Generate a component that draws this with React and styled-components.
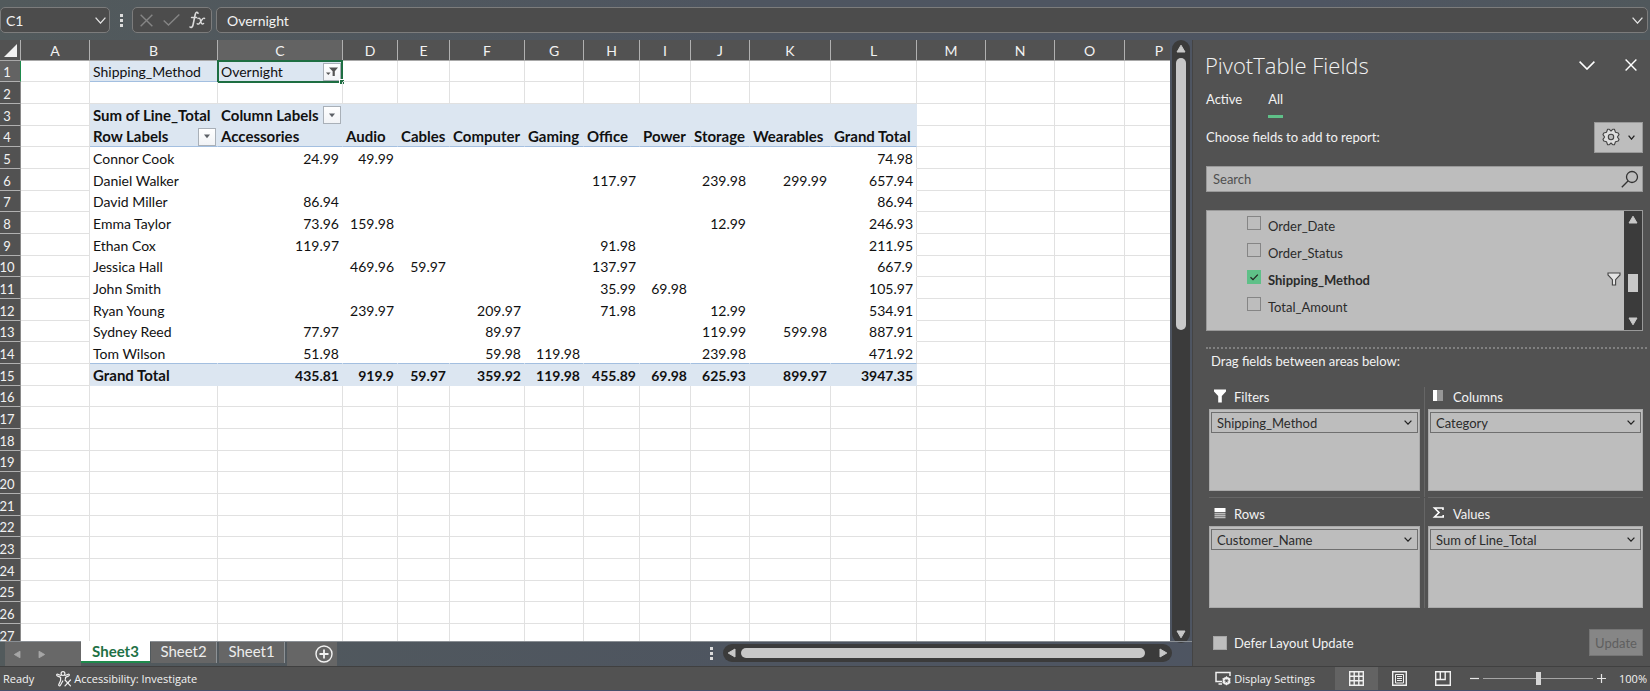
import React, { useState } from "react";
import styled, { createGlobalStyle, css } from "styled-components";

const ui = `"Open Sans", "Noto Sans", sans-serif`;
const sheetFont = `Lato, "Open Sans", sans-serif`;

const Global = createGlobalStyle`
  *, *::before, *::after { box-sizing: border-box; }
  html, body { margin: 0; }
  body { font-family: ${ui}; font-size: 13px; color: #f2f2f2; background: #4e5560; }
  button, input { font: inherit; color: inherit; margin: 0; padding: 0; border: 0; background: none; }
  svg { display: block; flex: none; }
  h2, h3, p { margin: 0; font-weight: 400; }
`;

const Window = styled.div`
  display: flex;
  flex-direction: column;
  height: 100vh;
  overflow: hidden;
  background: linear-gradient(90deg, #525a5c 0%, #4e5560 45%, #4e5562 80%, #50585c 100%);
`;

/* ---------- formula bar ---------- */
const FormulaBar = styled.header`
  display: flex;
  align-items: center;
  height: 40px;
  padding-right: 2px;
`;
const BarBox = styled.div`
  display: flex;
  align-items: center;
  height: 26px;
  width: ${(p) => p.$width || "auto"};
  flex: ${(p) => (p.$grow ? "1" : "none")};
  min-width: 0;
  padding: 0 4px 0 ${(p) => p.$pad || "5px"};
  border: 1px solid #7c7c7c;
  border-radius: 5px;
  background: #4c4c4c;
`;
const BarInput = styled.input`
  flex: 1;
  min-width: 0;
  height: 22px;
  font-family: ${sheetFont};
  font-size: 14px;
  outline: 0;
`;
const IconButton = styled.button`
  display: flex;
  align-items: center;
  justify-content: center;
  width: ${(p) => p.$w || 24}px;
  height: ${(p) => p.$h || 22}px;
  flex: none;
`;
const Dots = styled.div`
  display: flex;
  flex-direction: column;
  align-items: center;
  gap: 2px;
  width: ${(p) => p.$w}px;
  i { width: 3px; height: 3px; background: #dcdcdc; }
`;

/* ---------- workspace ---------- */
const Workspace = styled.main`
  display: flex;
  flex: 1;
  min-height: 0;
`;
const Book = styled.section`
  display: flex;
  flex-direction: column;
  flex: 1;
  min-width: 0;
`;
const GridArea = styled.div`
  display: flex;
  flex: 1;
  min-height: 0;
`;
const Viewport = styled.div`
  flex: 1;
  min-width: 0;
  overflow: hidden;
  background: #fff;
`;
const Grid = styled.table`
  table-layout: fixed;
  width: 0;
  margin-left: -6px;
  border-spacing: 0;
  font-family: ${sheetFont};
  font-size: 14px;
  line-height: 20px;
  color: #111;
`;
const ColHead = styled.th`
  height: 21px;
  padding: 2px 0 0;
  line-height: 18px;
  font-weight: 400;
  color: #f2f2f2;
  background: ${(p) => (p.$on ? "#636363" : "#525252")};
  border-right: 1px solid #b0b0b0;
  border-bottom: 1px solid ${(p) => (p.$on ? "#1e6e42" : "#a8a8a8")};
`;
const RowHead = styled.th`
  padding: 2px 0 0;
  font-size: 13px;
  line-height: 18px;
  font-weight: 400;
  color: #f2f2f2;
  background: ${(p) => (p.$on ? "#636363" : "#525252")};
  border-right: 1px solid ${(p) => (p.$on ? "#1e8a4c" : "#8a8a8a")};
  border-bottom: 1px solid #b0b0b0;
`;
const Corner = styled(ColHead)`
  padding: 0 3px 3px 0;
  vertical-align: bottom;
  svg { margin-left: auto; }
`;
const Row = styled.tr`
  height: 22px;
  &:nth-child(3n + 1) { height: 21px; }
`;
const Cell = styled.td`
  position: relative;
  padding: 1px 3px 0;
  line-height: 19px;
  white-space: nowrap;
  text-align: ${(p) => (p.$num ? "right" : "left")};
  font-weight: ${(p) => (p.$bold ? 700 : 400)};
  font-size: ${(p) => (p.$bold && !p.$num ? 15 : 14)}px;
  border-right: 1px solid #e1e1e1;
  border-bottom: 1px solid #e1e1e1;
  ${(p) =>
    p.$pivot &&
    css`
      border-bottom-color: transparent;
      border-right-color: ${p.$last ? "#e1e1e1" : "transparent"};
    `}
  ${(p) => p.$blue && css`background: #dce6f1; border-color: #dce6f1;`}
  ${(p) => p.$rule && css`border-bottom-color: #a3bfe0;`}
`;
const WithButton = styled.div`
  display: flex;
  align-items: center;
  justify-content: space-between;
  height: 18px;
  margin-right: -2px;
`;
const FilterButton = styled.button`
  display: flex;
  align-items: center;
  justify-content: center;
  width: 18px;
  height: 18px;
  border: 1px solid #a9b0b8;
  background: linear-gradient(#fff, #f1f3f6);
`;
const Selection = styled.div`
  position: absolute;
  inset: -1px -1px -2px -1px;
  border: 2px solid #1e6e42;
  pointer-events: none;
  &::after {
    content: "";
    position: absolute;
    right: -3px;
    bottom: -3px;
    width: 4px;
    height: 4px;
    background: #1e6e42;
    outline: 1px solid #fff;
  }
`;

/* ---------- scroll bars ---------- */
const VGutter = styled.div`
  display: flex;
  width: 22px;
  padding-left: 2px;
  margin-bottom: -2px;
`;
const Track = styled.div`
  display: flex;
  flex-direction: ${(p) => (p.$horizontal ? "row" : "column")};
  align-items: center;
  ${(p) => (p.$horizontal ? "height: 18px;" : "width: 18px;")}
  border-radius: ${(p) => (p.$square ? 0 : 9)}px;
  background: #3b3b3b;
`;
const Thumb = styled.div`
  border-radius: ${(p) => (p.$square ? 0 : 5)}px;
  background: #c8c8c8;
  flex: ${(p) => p.$flex};
  ${(p) => (p.$horizontal ? "height: 10px;" : "width: 10px;")}
`;
const Gap = styled.div`
  flex: ${(p) => p.$flex};
`;

/* ---------- sheet tabs ---------- */
const TabBar = styled.nav`
  display: flex;
  align-items: flex-start;
  height: 25px;
  padding-left: 5px;
  border-top: 1px solid #8a8f94;
`;
const TabNav = styled.div`
  display: flex;
  align-items: center;
  width: 76px;
  height: 24px;
  background: #686868;
`;
const SheetTab = styled.button`
  width: ${(p) => (p.$active ? 69 : 66)}px;
  height: ${(p) => (p.$active ? 22 : 21)}px;
  margin-right: 2px;
  padding-bottom: 3px;
  line-height: 18px;
  font-size: 15px;
  font-family: ${sheetFont};
  color: #ececec;
  background: #666;
  border-right: 1px solid #8d9296;
  ${(p) =>
    p.$active &&
    css`
      margin: -1px 1px 0 0;
      padding-bottom: 1px;
      color: #1e7145;
      font-weight: 700;
      background: #fff;
      border-right: 0;
      border-bottom: 2px solid #1e8a4c;
    `}
`;
const AddSheet = styled.button`
  display: flex;
  align-items: center;
  justify-content: flex-end;
  width: 50px;
  height: 24px;
  padding-right: 4px;
  background: #666;
`;
const HScroll = styled.div`
  display: flex;
  align-items: center;
  width: 493px;
  height: 22px;
  margin-left: auto;
  padding-right: 20px;
  > ${Track} { flex: 1; }
`;

/* ---------- fields pane ---------- */
const Pane = styled.aside`
  display: flex;
  flex-direction: column;
  flex: none;
  width: 458px;
  padding: 10px 7px 10px 13px;
  font-family: ${sheetFont};
  border-left: 1px solid #444;
  background: #525252;
`;
const PaneHead = styled.div`
  display: flex;
  align-items: center;
  height: 30px;
`;
const PaneTitle = styled.h2`
  flex: 1;
  font-family: ${ui};
  font-size: 22px;
  font-weight: 300;
  line-height: 30px;
  margin-left: -1px;
`;
const PaneTabs = styled.div`
  display: flex;
  gap: 26px;
  margin-top: 10px;
`;
const PaneTab = styled.button`
  height: 28px;
  padding-bottom: 8px;
  line-height: 18px;
  border-bottom: 3px solid ${(p) => (p.$active ? "#5fc088" : "transparent")};
`;
const ChooseRow = styled.div`
  display: flex;
  align-items: center;
  justify-content: space-between;
  height: 32px;
  margin-top: 3px;
`;
const GearButton = styled.button`
  display: flex;
  align-items: center;
  justify-content: center;
  gap: 8px;
  width: 49px;
  height: 31px;
  border: 1px solid #999;
  background: #bdbdbd;
`;
const SearchBox = styled.label`
  display: flex;
  align-items: center;
  height: 26px;
  margin-top: 13px;
  padding: 0 3px 0 6px;
  border: 1px solid #999;
  background: #bdbdbd;
  input { flex: 1; min-width: 0; outline: 0; color: #333; }
  input::placeholder { color: #505050; opacity: 1; }
`;
const FieldList = styled.div`
  display: flex;
  height: 121px;
  margin-top: 18px;
  border: 1px solid #999;
  background: #bdbdbd;
`;
const Fields = styled.div`
  flex: 1;
`;
const Field = styled.label`
  display: flex;
  align-items: center;
  height: 27px;
  padding: 0 3px 0 40px;
  color: #2b2b2b;
  font-weight: ${(p) => (p.$on ? 700 : 400)};
  input { margin-bottom: 3px; }
  span { flex: 1; padding: 3px 0 0 7px; line-height: 18px; }
`;
const Check = styled.input.attrs({ type: "checkbox" })`
  appearance: none;
  width: 14px;
  height: 14px;
  flex: none;
  border: 1px solid #858585;
  &:checked {
    border-color: #5fc088;
    background: #5fc088 url("data:image/svg+xml,%3Csvg xmlns='http://www.w3.org/2000/svg' viewBox='0 0 12 12'%3E%3Cpath d='M2.5 6.2 5 8.6 9.8 3.6' fill='none' stroke='%23222' stroke-width='1.2'/%3E%3C/svg%3E") center / 12px 12px no-repeat;
  }
  ${(p) => p.$solid && css`background: #bdbdbd; border-color: #a6a6a6;`}
`;
const DragHint = styled.p`
  margin: 16px -4px 0 0;
  padding: 3px 5px 0;
  line-height: 18px;
  border-top: 2px dotted #808080;
`;
const Areas = styled.div`
  display: grid;
  grid-template-columns: 211px 1fr;
  column-gap: 8px;
  margin: 17px 0 0 3px;
`;
const Area = styled.section`
  position: relative;
  padding-bottom: ${(p) => (p.$top ? 6 : 0)}px;
  border-bottom: ${(p) => (p.$top ? 1 : 0)}px solid #666;
  &:nth-child(even)::before {
    content: "";
    position: absolute;
    top: 0;
    bottom: 0;
    left: -4px;
    width: 1px;
    background: #666;
  }
`;
const AreaTitle = styled.h3`
  display: flex;
  align-items: center;
  gap: 7px;
  height: 22px;
  padding: 0 0 3px 4px;
  font-size: 13px;
  line-height: 18px;
  ${(p) => p.$low && css`height: 28px; padding-top: 6px;`}
  svg { margin-bottom: 2px; }
`;
const DropZone = styled.div`
  height: 82px;
  padding: 2px 1px;
  border: 1px solid #a9a9a9;
  background: #bdbdbd;
`;
const Pill = styled.button`
  display: flex;
  align-items: center;
  justify-content: space-between;
  width: 100%;
  height: 21px;
  padding: 0 5px;
  line-height: 18px;
  color: #2b2b2b;
  border: 1px solid #6f6f6f;
`;
const PaneFoot = styled.div`
  display: flex;
  align-items: center;
  justify-content: space-between;
  margin-top: auto;
  padding-left: 7px;
  label { display: flex; align-items: center; gap: 7px; }
`;
const UpdateButton = styled.button`
  width: 54px;
  height: 27px;
  border: 1px solid #757575;
  background: #868686;
  color: #5f5f5f;
`;

/* ---------- status bar ---------- */
const StatusBar = styled.footer`
  display: flex;
  align-items: center;
  height: 25px;
  padding: 0 3px;
  font-size: 11px;
  line-height: 16px;
  border-top: 1px solid #404040;
  border-bottom: 1px solid #46506a;
  background: #525252;
`;
const StatusButton = styled.button`
  display: flex;
  align-items: center;
  gap: 2px;
  margin-left: ${(p) => p.$ml}px;
`;
const StatusRight = styled.div`
  display: flex;
  align-items: center;
  margin-left: auto;
`;
const ViewButton = styled.button`
  display: flex;
  align-items: center;
  justify-content: center;
  width: 43px;
  height: 23px;
  background: ${(p) => (p.$on ? "#636363" : "transparent")};
`;
const ZoomSlider = styled.input.attrs({ type: "range" })`
  appearance: none;
  width: 110px;
  height: 14px;
  margin: 0 4px;
  background: linear-gradient(#a6a6a6, #a6a6a6) center / 100% 1px no-repeat;
  &::-webkit-slider-thumb {
    appearance: none;
    width: 5px;
    height: 13px;
    background: #d6d6d6;
  }
`;
const ZoomLabel = styled.span`
  width: 41px;
  text-align: right;
`;

/* ---------- icons ---------- */
const Chevron = ({ w = 10, h = 6, sw = 1.3, color = "#e6e6e6" }) => (
  <svg width={w} height={h} viewBox={`0 0 ${w} ${h}`}>
    <path d={`M.6 .6 ${w / 2} ${h - 0.9} ${w - 0.6} .6`} fill="none" stroke={color} strokeWidth={sw} />
  </svg>
);
const Cross = ({ size, color, sw = 1.3 }) => (
  <svg width={size} height={size} viewBox="0 0 12 12">
    <path d="M.6.6 11.4 11.4M11.4.6.6 11.4" stroke={color} strokeWidth={sw} />
  </svg>
);
const angles = { up: 0, right: 90, down: 180, left: 270 };
const Arrow = ({ dir, size = 18, color = "#c8c8c8" }) => (
  <svg width={size} height={size} viewBox="0 0 18 18">
    <path d="M9 5.2 13 12H5Z" fill={color} stroke={color} strokeWidth="1" strokeLinejoin="round" transform={`rotate(${angles[dir]} 9 9)`} />
  </svg>
);
const Caret = () => (
  <svg width="8" height="5" viewBox="0 0 8 5"><path d="M1 .5h6L4 4.2Z" fill="#5c6066" /></svg>
);
const AppliedFilter = () => (
  <svg width="12" height="12" viewBox="0 0 12 12">
    <path d="M3 1.5h9L8.8 5.2V10H6.600V5.2Z" fill="#555" />
    <path d="M0 6.500h4.600L2.300 9Z" fill="#555" />
  </svg>
);
const Funnel = ({ outline }) => (
  <svg width="14" height="14" viewBox="0 0 14 14">
    {outline ? (
      <path d="M1 1h12v2L8.6 7.6V13H5.4V7.6L1 3Z" fill="#e4e4e4" stroke="#444" strokeWidth="1.1" />
    ) : (
      <path d="M1 .5h12v2L8.8 7v6.5H5.2V7L1 2.5Z" fill="#fff" />
    )}
  </svg>
);
const ColumnsIcon = () => (
  <svg width="14" height="12" viewBox="0 0 14 12">
    <rect x="1" width="4" height="11" fill="#fff" />
    <path d="M6 0v11M8 0v11M10 0v11" stroke="#bcbcbc" strokeWidth="1.3" />
  </svg>
);
const RowsIcon = () => (
  <svg width="14" height="12" viewBox="0 0 14 12">
    <rect x="1.5" y="1" width="11" height="4" fill="#fff" />
    <path d="M1.5 6.5h11M1.5 8.5h11M1.5 10.5h11" stroke="#bcbcbc" strokeWidth="1.3" />
  </svg>
);
const SigmaIcon = () => (
  <svg width="14" height="12" viewBox="0 0 14 12">
    <path d="M11 3V1H2.5L7 5.5 2.5 10H11.2V8" fill="none" stroke="#fff" strokeWidth="1.6" />
  </svg>
);
const SearchIcon = () => (
  <svg width="18" height="18" viewBox="0 0 18 18" fill="none" stroke="#333" strokeWidth="1.3">
    <circle cx="11" cy="7" r="5.5" /><path d="M7 11 .8 17.2" />
  </svg>
);
const Gear = () => (
  <svg width="18" height="18" viewBox="0 0 18 18" fill="#dedede" stroke="#444" strokeWidth="1.1" strokeLinejoin="round">
    <path d="M5.600 1.300 7.300 1.300 9 3 10.700 1.300 12.400 1.300 13.500 4.300 16.200 5 17 6.600 15.400 9 17 11.400 16.200 13 13.500 13.700 12.400 16.700 10.700 16.700 9 15 7.300 16.700 5.600 16.700 4.500 13.700 1.800 13 1 11.400 2.600 9 1 6.600 1.800 5 4.500 4.300Z" />
    <circle cx="9" cy="9" r="2.7" fill="#bdbdbd" />
  </svg>
);
const FxIcon = () => (
  <svg width="17" height="18" viewBox="0 0 17 18" fill="none" stroke="#dcdcdc" strokeLinecap="round">
    <path d="M9 2.2C8.6.8 6.8.8 6.2 3.5L4 14c-.5 2.4-2 2.8-3 2M2.6 6.5h5" strokeWidth="1.6" />
    <path d="M9 7.5c1.5-1 2.2 0 2.7 2.6.5 2.7 1.4 3.7 2.9 2.4M15.6 7.4c-1-.8-2 .2-3.6 2.8s-2.7 3.5-3.8 2.6" strokeWidth="1.4" />
  </svg>
);
const TickIcon = () => (
  <svg width="17" height="12" viewBox="0 0 17 12"><path d="M.7 6.5 5.5 11 16.3.6" fill="none" stroke="#858585" strokeWidth="1.4" /></svg>
);
const PlusCircle = () => (
  <svg width="18" height="18" viewBox="0 0 18 18" fill="none" stroke="#f2f2f2" strokeWidth="1.4">
    <circle cx="9" cy="9" r="8" /><path d="M9 4.5v9M4.5 9h9" strokeWidth="1.8" />
  </svg>
);
const AccessIcon = () => (
  <svg width="16" height="16" viewBox="0 0 16 16" fill="none" stroke="#f0f0f0" strokeWidth="1.2" strokeLinecap="round" strokeLinejoin="round">
    <circle cx="7" cy="2.6" r="1.9" />
    <path d="M5 4.5 1.8 3.2C.6 2.8.3 4.4 1.3 4.9L4.6 6.4v3L2.8 13.5c-.5 1.3 1 1.9 1.6.8L6.8 10M9 4.5l3.2-1.3c1.2-.4 1.5 1.2.5 1.7L9.5 6.4v1.4M9 9l5.5 5.800M14.5 9 9 14.8" />
  </svg>
);
const DisplayIcon = () => (
  <svg width="17" height="15" viewBox="0 0 17 15" fill="none" stroke="#f0f0f0">
    <path d="M7 10.500H1V1.500h14V5" strokeWidth="1.5" /><path d="M3.500 13H7" strokeWidth="1.5" />
    <circle cx="11.5" cy="9.800" r="3" strokeWidth="1.8" />
    <path d="M11.500 5.300v9M7.600 7.500l7.800 4.600M15.400 7.500l-7.800 4.600" strokeWidth="1.2" />
    <circle cx="11.5" cy="9.800" r="1.4" fill="#525252" stroke="none" />
  </svg>
);
const NormalView = () => (
  <svg width="15" height="15" viewBox="0 0 15 15"><path d="M.7.7h13.6v13.6H.7ZM5.2.7v13.6M9.8.7v13.6M.7 5.2h13.6M.7 9.8h13.6" fill="none" stroke="#f0f0f0" strokeWidth="1.4" /></svg>
);
const PageView = () => (
  <svg width="15" height="15" viewBox="0 0 15 15" fill="none" stroke="#f0f0f0"><path d="M.7.7h13.6v13.6H.7Z" strokeWidth="1.4" /><path d="M3.5 3.5h8v8.5h-8ZM5 5.5h5M5 7.5h5M5 9.5h5" /></svg>
);
const BreakView = () => (
  <svg width="16" height="15" viewBox="0 0 16 15" fill="none" stroke="#f0f0f0" strokeWidth="1.4"><path d="M.7.7h14.6v13.6H.7ZM.7 8.5h9.5V.7M5.3.7v7.8" /></svg>
);
const ZoomSign = ({ plus }) => (
  <svg width="9" height="9" viewBox="0 0 9 9"><path d={plus ? "M0 4.5h9M4.5 0v9" : "M0 4.5h9"} stroke="#e6e6e6" strokeWidth="1.2" /></svg>
);

/* ---------- data ---------- */
const columns = [
  ["A", 69], ["B", 128], ["C", 125], ["D", 55], ["E", 52], ["F", 75], ["G", 59], ["H", 56],
  ["I", 51], ["J", 59], ["K", 81], ["L", 86], ["M", 69], ["N", 69], ["O", 70], ["P", 69],
];
const data = {
  1: { B: "Shipping_Method", C: "Overnight" },
  3: { B: "Sum of Line_Total", C: "Column Labels" },
  4: { B: "Row Labels", C: "Accessories", D: "Audio", E: "Cables", F: "Computer", G: "Gaming", H: "Office", I: "Power", J: "Storage", K: "Wearables", L: "Grand Total" },
  5: { B: "Connor Cook", C: 24.99, D: 49.99, L: 74.98 },
  6: { B: "Daniel Walker", H: 117.97, J: 239.98, K: 299.99, L: 657.94 },
  7: { B: "David Miller", C: 86.94, L: 86.94 },
  8: { B: "Emma Taylor", C: 73.96, D: 159.98, J: 12.99, L: 246.93 },
  9: { B: "Ethan Cox", C: 119.97, H: 91.98, L: 211.95 },
  10: { B: "Jessica Hall", D: 469.96, E: 59.97, H: 137.97, L: 667.9 },
  11: { B: "John Smith", H: 35.99, I: 69.98, L: 105.97 },
  12: { B: "Ryan Young", D: 239.97, F: 209.97, H: 71.98, J: 12.99, L: 534.91 },
  13: { B: "Sydney Reed", C: 77.97, F: 89.97, J: 119.99, K: 599.98, L: 887.91 },
  14: { B: "Tom Wilson", C: 51.98, F: 59.98, G: 119.98, J: 239.98, L: 471.92 },
  15: { B: "Grand Total", C: 435.81, D: 919.9, E: 59.97, F: 359.92, G: 119.98, H: 455.89, I: 69.98, J: 625.93, K: 899.97, L: 3947.35 },
};
const rowNumbers = Array.from({ length: 27 }, (_, i) => i + 1);
const buttons = { C1: <AppliedFilter />, C3: <Caret />, B4: <Caret /> };

function SheetCell({ col, row }) {
  const value = data[row]?.[col];
  const inPivot = col >= "B" && col <= "L" && row >= 3 && row <= 15;
  const inFilter = row === 1 && (col === "B" || col === "C");
  const button = buttons[col + row];
  return (
    <Cell
      $pivot={inPivot}
      $last={col === "L"}
      $blue={inFilter || (inPivot && (row <= 4 || row === 15))}
      $rule={inFilter || (inPivot && (row === 4 || row === 14))}
      $bold={inPivot && (row <= 4 || row === 15)}
      $num={typeof value === "number"}
    >
      {button ? (
        <WithButton>
          <span>{value}</span>
          <FilterButton aria-label={`Filter ${value}`}>{button}</FilterButton>
        </WithButton>
      ) : value}
      {col + row === "C1" && <Selection />}
    </Cell>
  );
}

function Spreadsheet() {
  return (
    <Grid>
      <colgroup>
        <col width="27" />
        {columns.map(([c, w]) => <col key={c} width={w} />)}
      </colgroup>
      <thead>
        <tr>
          <Corner as="td"><svg width="13" height="13" viewBox="0 0 13 13"><path d="M13 0v13H0Z" fill="#f0f0f0" /></svg></Corner>
          {columns.map(([c]) => <ColHead key={c} $on={c === "C"}>{c}</ColHead>)}
        </tr>
      </thead>
      <tbody>
        {rowNumbers.map((r) => (
          <Row key={r}>
            <RowHead $on={r === 1}>{r}</RowHead>
            {columns.map(([c]) => <SheetCell key={c} col={c} row={r} />)}
          </Row>
        ))}
      </tbody>
    </Grid>
  );
}

const areas = [
  ["Filters", <Funnel />, "Shipping_Method"],
  ["Columns", <ColumnsIcon />, "Category"],
  ["Rows", <RowsIcon />, "Customer_Name"],
  ["Values", <SigmaIcon />, "Sum of Line_Total"],
];

function FieldsPane() {
  const [picked, setPicked] = useState({ Shipping_Method: true });
  return (
    <Pane>
      <PaneHead>
        <PaneTitle>PivotTable Fields</PaneTitle>
        <IconButton aria-label="Pane options" $w={64}><Chevron w={16} h={9} sw={1.5} color="#fff" /></IconButton>
        <IconButton aria-label="Close" $w={24}><Cross size={12} color="#fff" sw={1.4} /></IconButton>
      </PaneHead>
      <PaneTabs>
        <PaneTab>Active</PaneTab>
        <PaneTab $active>All</PaneTab>
      </PaneTabs>
      <ChooseRow>
        <span>Choose fields to add to report:</span>
        <GearButton aria-label="Layout options"><Gear /><Chevron w={7} h={5} color="#222" /></GearButton>
      </ChooseRow>
      <SearchBox><input aria-label="Search" placeholder="Search" /><SearchIcon /></SearchBox>
      <FieldList>
        <Fields>
          {["Order_Date", "Order_Status", "Shipping_Method", "Total_Amount"].map((name) => (
            <Field key={name} $on={!!picked[name]}>
              <Check checked={!!picked[name]} onChange={(e) => setPicked({ ...picked, [name]: e.target.checked })} />
              <span>{name}</span>
              {name === "Shipping_Method" && <Funnel outline />}
            </Field>
          ))}
        </Fields>
        <Track $square>
          <Arrow dir="up" /><Gap $flex="46" /><Thumb $square $flex="0 0 18px" /><Gap $flex="20" /><Arrow dir="down" />
        </Track>
      </FieldList>
      <DragHint>Drag fields between areas below:</DragHint>
      <Areas>
        {areas.map(([title, icon, item], i) => (
          <Area key={title} $top={i < 2}>
            <AreaTitle $low={i > 1}>{icon}{title}</AreaTitle>
            <DropZone><Pill>{item}<Chevron w={8} h={5} color="#222" /></Pill></DropZone>
          </Area>
        ))}
      </Areas>
      <PaneFoot>
        <label><Check $solid />Defer Layout Update</label>
        <UpdateButton disabled>Update</UpdateButton>
      </PaneFoot>
    </Pane>
  );
}

export default function App() {
  return (
    <>
      <Global />
      <Window>
        <FormulaBar>
          <BarBox $width="110px">
            <BarInput aria-label="Name box" defaultValue="C1" />
            <IconButton aria-label="Named ranges" $w={10}><Chevron w={11} h={7} /></IconButton>
          </BarBox>
          <Dots $w={22}><i /><i /><i /></Dots>
          <BarBox $width="80px" $pad="1px">
            <IconButton aria-label="Cancel"><Cross size={13} color="#858585" /></IconButton>
            <IconButton aria-label="Enter" $w={26}><TickIcon /></IconButton>
            <IconButton aria-label="Insert function" $w={26}><FxIcon /></IconButton>
          </BarBox>
          <Gap $flex="0 0 4px" />
          <BarBox $grow $pad="10px">
            <BarInput aria-label="Formula" defaultValue="Overnight" />
            <IconButton aria-label="Expand formula bar" $w={11}><Chevron w={11} h={7} /></IconButton>
          </BarBox>
        </FormulaBar>
        <Workspace>
          <Book>
            <GridArea>
              <Viewport><Spreadsheet /></Viewport>
              <VGutter>
                <Track>
                  <Arrow dir="up" /><Thumb $flex="272" /><Gap $flex="296" /><Arrow dir="down" />
                </Track>
              </VGutter>
            </GridArea>
            <TabBar>
              <TabNav>
                <IconButton aria-label="Previous sheet"><Arrow dir="left" size={15} color="#a6a6a6" /></IconButton>
                <IconButton aria-label="Next sheet"><Arrow dir="right" size={15} color="#a6a6a6" /></IconButton>
              </TabNav>
              <SheetTab $active>Sheet3</SheetTab>
              <SheetTab>Sheet2</SheetTab>
              <SheetTab>Sheet1</SheetTab>
              <AddSheet aria-label="New sheet"><PlusCircle /></AddSheet>
              <HScroll>
                <Dots $w={24}><i /><i /><i /></Dots>
                <Track $horizontal>
                  <Arrow dir="left" /><Thumb $horizontal $flex="404" /><Gap $flex="9" /><Arrow dir="right" />
                </Track>
              </HScroll>
            </TabBar>
          </Book>
          <FieldsPane />
        </Workspace>
        <StatusBar>
          <span>Ready</span>
          <StatusButton $ml={22}><AccessIcon />Accessibility: Investigate</StatusButton>
          <StatusRight>
            <StatusButton><DisplayIcon />Display Settings</StatusButton>
            <Gap $flex="0 0 20px" />
            <ViewButton $on aria-label="Normal"><NormalView /></ViewButton>
            <ViewButton aria-label="Page layout"><PageView /></ViewButton>
            <ViewButton aria-label="Page break preview"><BreakView /></ViewButton>
            <Gap $flex="0 0 6px" />
            <IconButton aria-label="Zoom out" $w={9}><ZoomSign /></IconButton>
            <ZoomSlider aria-label="Zoom" defaultValue={50} />
            <IconButton aria-label="Zoom in" $w={9}><ZoomSign plus /></IconButton>
            <ZoomLabel>100%</ZoomLabel>
          </StatusRight>
        </StatusBar>
      </Window>
    </>
  );
}
